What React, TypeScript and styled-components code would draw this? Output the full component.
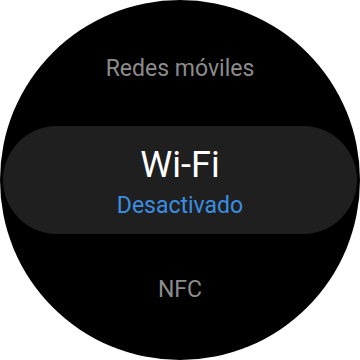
import styled, { createGlobalStyle } from "styled-components";

const GlobalStyle = createGlobalStyle`
  html, body {
    margin: 0;
    padding: 0;
    background: #fff;
  }
  body {
    font-family: "Roboto", "Noto Sans", sans-serif;
  }
`;

const items = [
  { title: "Redes móviles" },
  { title: "Wi-Fi", status: "Desactivado", active: true },
  { title: "NFC" },
];

export default function App() {
  return (
    <>
      <GlobalStyle />
      <Face>
        <List>
          {items.map((item) =>
            item.active ? (
              <ActiveRow key={item.title}>
                <ActiveTitle>{item.title}</ActiveTitle>
                <Status>{item.status}</Status>
              </ActiveRow>
            ) : (
              <Row key={item.title}>{item.title}</Row>
            )
          )}
        </List>
      </Face>
    </>
  );
}

const Face = styled.div`
  width: 360px;
  height: 360px;
  border-radius: 50%;
  background: #000;
  overflow: hidden;
  display: flex;
  justify-content: center;
`;

const List = styled.div`
  display: flex;
  flex-direction: column;
  align-items: center;
  width: 354px;
  padding-top: 49px;
`;

const Row = styled.div`
  height: 40px;
  line-height: 40px;
  color: #8c8c8c;
  font-size: 23px;
  text-align: center;
`;

const ActiveRow = styled.div`
  width: 354px;
  height: 108px;
  margin: 37px 0 36px;
  border-radius: 54px;
  background: #1f1f1f;
  display: flex;
  flex-direction: column;
  align-items: center;
  box-sizing: border-box;
  padding-top: 18px;
`;

const ActiveTitle = styled.div`
  color: #fff;
  font-size: 36px;
  line-height: 42px;
`;

const Status = styled.div`
  margin-top: 6px;
  color: #3b8ee0;
  font-size: 23px;
  line-height: 28px;
`;
